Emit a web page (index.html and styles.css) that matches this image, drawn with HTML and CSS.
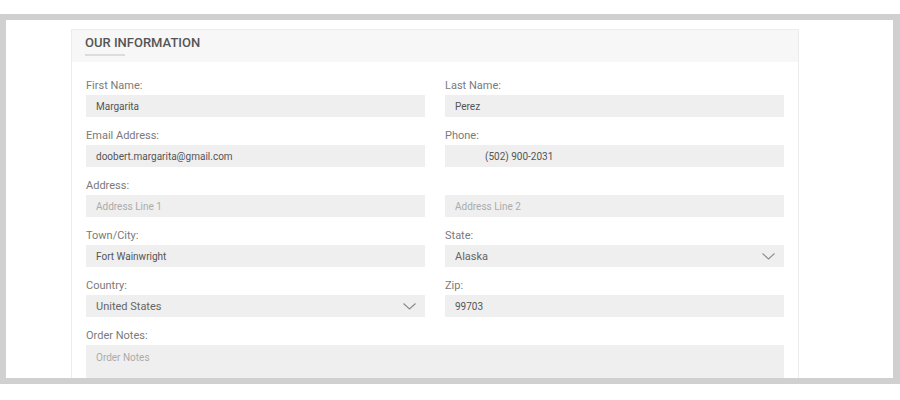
FILE: index.html
```html
<!DOCTYPE html>
<html lang="en">
<head>
  <meta charset="UTF-8" />
  <meta name="viewport" content="width=device-width, initial-scale=1.0"/>
  <title>Checkout - Our Information</title>
  <link rel="stylesheet" href="styles.css">
</head>
<body>
  <div class="frame">
    <div class="card">
      <div class="card-header">
        <h2>Our Information</h2>
        <div class="title-bar"></div>
      </div>

      <form class="card-body">
        <div class="form-group">
          <label for="first-name">First Name:</label>
          <input type="text" id="first-name" value="Margarita" />
        </div>
        <div class="form-group">
          <label for="last-name">Last Name:</label>
          <input type="text" id="last-name" value="Perez" />
        </div>

        <div class="form-group">
          <label for="email">Email Address:</label>
          <input type="email" id="email" value="doobert.margarita@gmail.com" />
        </div>
        <div class="form-group">
          <label for="phone">Phone:</label>
          <input type="tel" id="phone" class="phone" value="(502) 900-2031" />
        </div>

        <div class="form-group">
          <label for="address1">Address:</label>
          <input type="text" id="address1" placeholder="Address Line 1" />
        </div>
        <div class="form-group">
          <label for="address2">&nbsp;</label>
          <input type="text" id="address2" class="offset" placeholder="Address Line 2" />
        </div>

        <div class="form-group">
          <label for="city">Town/City:</label>
          <input type="text" id="city" value="Fort Wainwright" />
        </div>
        <div class="form-group">
          <label for="state">State:</label>
          <div class="select-wrap">
            <select id="state" class="big">
              <option>Alaska</option>
            </select>
            <svg class="chevron" width="13" height="7" viewBox="0 0 13 7"><polyline points="0.5,0.5 6.5,6 12.5,0.5" /></svg>
          </div>
        </div>

        <div class="form-group">
          <label for="country">Country:</label>
          <div class="select-wrap">
            <select id="country" class="big">
              <option>United States</option>
            </select>
            <svg class="chevron" width="13" height="7" viewBox="0 0 13 7"><polyline points="0.5,0.5 6.5,6 12.5,0.5" /></svg>
          </div>
        </div>
        <div class="form-group">
          <label for="zip">Zip:</label>
          <input type="text" id="zip" value="99703" />
        </div>

        <div class="form-group full">
          <label for="notes">Order Notes:</label>
          <textarea id="notes" placeholder="Order Notes"></textarea>
        </div>
      </form>
    </div>
  </div>
</body>
</html>
```

FILE: styles.css
```css
:root {
  --frame: #d0d0d0;
  --line: #ececec;
  --head-bg: #f7f7f7;
  --field: #efefef;
  --text: #555;
  --text-light: #7a7a7a;
  --placeholder: #ababab;
}

* {
  box-sizing: border-box;
  margin: 0;
  padding: 0;
  font-family: Roboto, 'Liberation Sans', sans-serif;
}

body {
  background: white;
  color: var(--text);
  padding-top: 14px;
}

.frame {
  height: 370px;
  border: 6px solid var(--frame);
  border-right-width: 7px;
  padding: 9px 0 0 65px;
  overflow: hidden;
}

.card {
  width: 728px;
  border: 1px solid var(--line);
  background: white;
}

.card-header {
  background: var(--head-bg);
  padding: 4px 13px 6px;
}

.card-header h2 {
  font-size: 13px;
  line-height: 18px;
  font-weight: 500;
  text-transform: uppercase;
  color: #555;
}

.title-bar {
  width: 40px;
  height: 2px;
  margin-top: 2px;
  background: #dcdcdc;
}

.card-body {
  display: grid;
  grid-template-columns: 1fr 1fr;
  column-gap: 20px;
  padding: 17px 14px 20px;
}

.form-group {
  margin-bottom: 12px;
}

.form-group.full {
  grid-column: 1 / -1;
}

.form-group label {
  display: block;
  font-size: 11px;
  line-height: 14px;
  color: var(--text-light);
  margin-bottom: 2px;
}

.form-group input,
.form-group select,
.form-group textarea {
  display: block;
  width: 100%;
  height: 22px;
  padding: 0 10px;
  border: none;
  background: var(--field);
  font-size: 10px;
  color: var(--text);
  outline: none;
}

.form-group input.offset {
  margin-top: 1px;
}

.form-group input.phone {
  padding-left: 40px;
}

.form-group ::placeholder {
  color: var(--placeholder);
}

.form-group select {
  appearance: none;
  -webkit-appearance: none;
  font-size: 11px;
  color: #666;
}

.select-wrap {
  position: relative;
}

.chevron {
  position: absolute;
  right: 9px;
  top: 8px;
  fill: none;
  stroke: #8a8a8a;
  stroke-width: 1.1;
}

.form-group textarea {
  height: 70px;
  padding-top: 7px;
  resize: none;
}
```
